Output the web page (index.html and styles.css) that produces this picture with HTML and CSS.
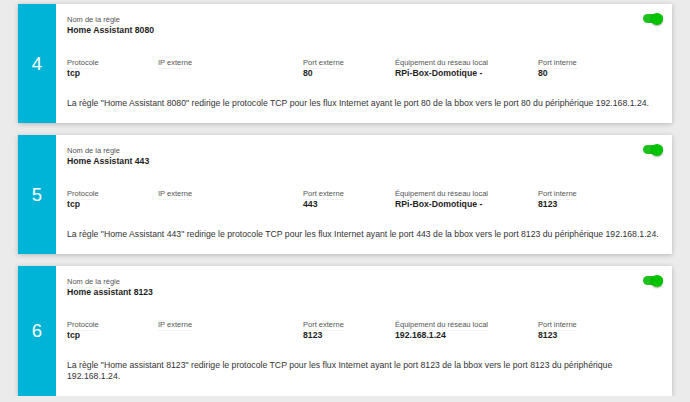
FILE: index.html
```html
<!DOCTYPE html>
<html lang="fr">
<head>
<meta charset="utf-8">
<title>Règles NAT</title>
<link rel="stylesheet" href="styles.css">
</head>
<body>
<div class="list">
  <div class="card">
    <div class="num">4</div>
    <div class="body">
      <div class="head">
        <div class="field">
          <span class="label">Nom de la règle</span>
          <span class="value">Home Assistant 8080</span>
        </div>
        <span class="toggle"><span class="knob"></span></span>
      </div>
      <div class="grid">
        <div class="field"><span class="label">Protocole</span><span class="value">tcp</span></div>
        <div class="field"><span class="label">IP externe</span><span class="value"></span></div>
        <div class="field"><span class="label">Port externe</span><span class="value">80</span></div>
        <div class="field"><span class="label">Équipement du réseau local</span><span class="value">RPi-Box-Domotique -</span></div>
        <div class="field"><span class="label">Port interne</span><span class="value">80</span></div>
      </div>
      <p class="desc">La règle "Home Assistant 8080" redirige le protocole TCP pour les flux Internet ayant le port 80 de la bbox vers le port 80 du périphérique 192.168.1.24.</p>
    </div>
  </div>
  <div class="card">
    <div class="num">5</div>
    <div class="body">
      <div class="head">
        <div class="field">
          <span class="label">Nom de la règle</span>
          <span class="value">Home Assistant 443</span>
        </div>
        <span class="toggle"><span class="knob"></span></span>
      </div>
      <div class="grid">
        <div class="field"><span class="label">Protocole</span><span class="value">tcp</span></div>
        <div class="field"><span class="label">IP externe</span><span class="value"></span></div>
        <div class="field"><span class="label">Port externe</span><span class="value">443</span></div>
        <div class="field"><span class="label">Équipement du réseau local</span><span class="value">RPi-Box-Domotique -</span></div>
        <div class="field"><span class="label">Port interne</span><span class="value">8123</span></div>
      </div>
      <p class="desc">La règle "Home Assistant 443" redirige le protocole TCP pour les flux Internet ayant le port 443 de la bbox vers le port 8123 du périphérique 192.168.1.24.</p>
    </div>
  </div>
  <div class="card">
    <div class="num">6</div>
    <div class="body">
      <div class="head">
        <div class="field">
          <span class="label">Nom de la règle</span>
          <span class="value">Home assistant 8123</span>
        </div>
        <span class="toggle"><span class="knob"></span></span>
      </div>
      <div class="grid">
        <div class="field"><span class="label">Protocole</span><span class="value">tcp</span></div>
        <div class="field"><span class="label">IP externe</span><span class="value"></span></div>
        <div class="field"><span class="label">Port externe</span><span class="value">8123</span></div>
        <div class="field"><span class="label">Équipement du réseau local</span><span class="value">192.168.1.24</span></div>
        <div class="field"><span class="label">Port interne</span><span class="value">8123</span></div>
      </div>
      <p class="desc">La règle "Home assistant 8123" redirige le protocole TCP pour les flux Internet ayant le port 8123 de la bbox vers le port 8123 du périphérique 192.168.1.24.</p>
    </div>
  </div>
</div>
</body>
</html>
```
FILE: styles.css
```css
html, body {
  margin: 0;
  padding: 0;
}
body {
  background: #ebebeb;
  font-family: "Liberation Sans", Arial, sans-serif;
  color: #222;
}
.list {
  display: flex;
  flex-direction: column;
  gap: 12px;
  padding: 4px 18px 0 18px;
}
.card {
  display: flex;
  background: #fff;
  box-shadow: 0 1px 5px rgba(0, 0, 0, 0.22);
}
.num {
  width: 38px;
  flex: none;
  background: #00b4d7;
  color: #fff;
  font-size: 18.5px;
  display: flex;
  align-items: center;
  justify-content: center;
}
.body {
  flex: 1;
  padding: 11px 9px 14px 11px;
  min-width: 0;
}
.head {
  display: flex;
  justify-content: space-between;
  align-items: flex-start;
}
.field {
  display: flex;
  flex-direction: column;
  align-items: flex-start;
}
.label {
  font-size: 7.5px;
  line-height: 10px;
  color: #555;
  border-bottom: 1px solid #f3f3f3;
  margin-bottom: -1px;
}
.value {
  font-size: 8.7px;
  line-height: 11px;
  font-weight: bold;
  color: #1e1e1e;
  min-height: 11px;
}
.toggle {
  position: relative;
  display: block;
  width: 20px;
  height: 9px;
  margin-top: -1px;
  border-radius: 5px;
  background: #1ec21e;
}
.knob {
  position: absolute;
  right: 0;
  top: -1.5px;
  width: 12px;
  height: 12px;
  border-radius: 50%;
  background: #00c300;
  box-shadow: 0 1px 2px rgba(0, 0, 0, 0.35);
}
.grid {
  display: grid;
  grid-template-columns: 91px 145px 92px 143px auto;
  margin-top: 22px;
}
.desc {
  margin: 19px 0 0 0;
  font-size: 8.7px;
  line-height: 11px;
  color: #333;
}
```
